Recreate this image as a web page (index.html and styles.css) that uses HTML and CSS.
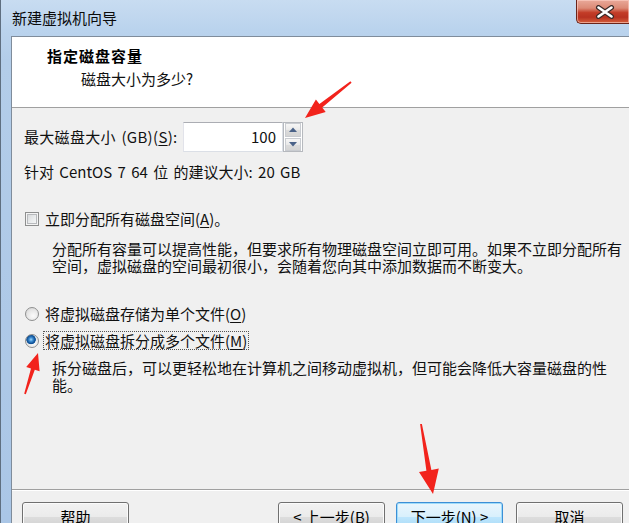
FILE: index.html
```html
<!DOCTYPE html>
<html lang="zh-CN">
<head>
<meta charset="utf-8">
<title>新建虚拟机向导</title>
<link rel="stylesheet" href="styles.css">
</head>
<body>
<div class="window">
  <div class="titlebar">
    <span class="title">新建虚拟机向导</span>
    <div class="close">
      <svg width="20" height="14" viewBox="0 0 20 14">
        <path d="M3.5 2.5 L16.5 11.5 M16.5 2.5 L3.5 11.5" stroke="#3b2a28" stroke-width="5" stroke-linecap="round" fill="none"/>
        <path d="M3.5 2.5 L16.5 11.5 M16.5 2.5 L3.5 11.5" stroke="#ffffff" stroke-width="2.6" stroke-linecap="round" fill="none"/>
      </svg>
    </div>
  </div>
  <div class="client">
    <div class="header">
      <div class="h-title">指定磁盘容量</div>
      <div class="h-sub">磁盘大小为多少?</div>
    </div>
    <div class="content">
      <div class="size-row">
        <span class="size-label">最大磁盘大小 (GB)(<u>S</u>):</span>
        <div class="spin">
          <div class="spin-input">100</div>
          <div class="spin-btns">
            <div class="spin-btn"><svg width="8" height="5" viewBox="0 0 8 5"><path d="M0 5 L4 0.5 L8 5 Z" fill="#4a6288"/></svg></div>
            <div class="spin-btn"><svg width="8" height="5" viewBox="0 0 8 5"><path d="M0 0 L4 4.5 L8 0 Z" fill="#4a6288"/></svg></div>
          </div>
        </div>
      </div>
      <div class="rec">针对 CentOS 7 64 位 的建议大小: 20 GB</div>
      <div class="opt check-row">
        <span class="checkbox"></span>
        <span class="opt-label">立即分配所有磁盘空间(<u>A</u>)。</span>
      </div>
      <div class="desc desc-a">分配所有容量可以提高性能，但要求所有物理磁盘空间立即可用。如果不立即分配所有<br>空间，虚拟磁盘的空间最初很小，会随着您向其中添加数据而不断变大。</div>
      <div class="opt radio-first">
        <span class="radio"></span>
        <span class="opt-label">将虚拟磁盘存储为单个文件(<u>O</u>)</span>
      </div>
      <div class="opt radio-second">
        <span class="radio checked"></span>
        <span class="opt-label focused">将虚拟磁盘拆分成多个文件(<u>M</u>)</span>
      </div>
      <div class="desc desc-b">拆分磁盘后，可以更轻松地在计算机之间移动虚拟机，但可能会降低大容量磁盘的性<br>能。</div>
    </div>
    <div class="footer">
      <div class="btn btn-help">帮助</div>
      <div class="btn btn-back">&lt; 上一步(B)</div>
      <div class="btn btn-next default">下一步(N) &gt;</div>
      <div class="btn btn-cancel">取消</div>
    </div>
  </div>
</div>
<svg class="annot" width="629" height="523" viewBox="0 0 629 523">
  <polygon fill="#f2231c" points="351.6,82.8 322.2,107.4 325.7,112.0 305,118 315.9,99.4 319.4,104.0 350.4,81.2"/>
  <polygon fill="#f2231c" points="25.8,394.2 34.8,369.8 39.6,371.3 38,353 26.2,367.1 31.0,368.6 24.2,393.8"/>
  <polygon fill="#f2231c" points="421.9,423.9 431.4,469.9 438.8,468.6 433,494 419.0,472.0 426.4,470.7 420.1,424.1"/>
</svg>
</body>
</html>
```
FILE: styles.css
```css
html, body {
  margin: 0;
  padding: 0;
}
body {
  width: 629px;
  height: 523px;
  overflow: hidden;
  position: relative;
  font-family: "Noto Sans CJK SC", "Noto Sans", sans-serif;
  font-size: 15px;
  color: #111;
  background: #b9d1ea;
}
u {
  text-decoration: underline;
  text-underline-offset: 2px;
}
.window {
  height: 523px;
  display: flex;
  flex-direction: column;
  border-left: 1px solid #5f6f80;
  box-sizing: border-box;
  background: linear-gradient(180deg, #c8dcf1 0px, #bad3ed 30px, #b3cde9 60px, #aac6e6 523px);
}
.titlebar {
  height: 36px;
  flex: none;
  display: flex;
  align-items: flex-start;
  box-sizing: border-box;
}
.title {
  padding: 8px 0 0 11px;
  line-height: 20px;
  font-size: 15px;
  color: #0b0b0b;
}
.close {
  margin-left: auto;
  width: 53px;
  height: 24px;
  box-sizing: border-box;
  border: 1px solid #6b2419;
  border-top: none;
  border-right: none;
  border-radius: 0 0 0 5px;
  background: linear-gradient(180deg, #e9a99a 0%, #dc8a76 35%, #c33c27 55%, #b83221 75%, #d5603c 100%);
  box-shadow: inset 0 0 0 1px rgba(255, 210, 200, 0.6);
  display: flex;
  align-items: center;
  justify-content: center;
}
.close svg {
  display: block;
  margin-left: 3px;
}
.client {
  flex: 1;
  display: flex;
  flex-direction: column;
  margin-left: 10px;
  border-left: 1px solid #7f8c9b;
  border-top: 1px solid #7f8c9b;
  background: #f0f0f0;
  min-height: 0;
}
.header {
  height: 71px;
  flex: none;
  box-sizing: border-box;
  background: #ffffff;
  border-bottom: 1px solid #a0a0a0;
  padding: 9px 0 0 35px;
}
.h-title {
  font-weight: bold;
  line-height: 20px;
  font-size: 15px;
  letter-spacing: 1px;
  color: #000;
}
.h-sub {
  margin-top: 3px;
  margin-left: 34px;
  line-height: 20px;
  color: #111;
}
.content {
  flex: 1;
  min-height: 0;
  padding: 14px 0 0 12px;
  display: flex;
  flex-direction: column;
  align-items: flex-start;
}
.size-row {
  display: flex;
  align-items: center;
  height: 30px;
}
.size-label {
  width: 159px;
  line-height: 30px;
  word-spacing: 2px;
  letter-spacing: 0.3px;
}
.spin {
  display: flex;
  height: 30px;
}
.spin-input {
  width: 100px;
  height: 30px;
  box-sizing: border-box;
  border: 1px solid #dbdfe6;
  border-top-color: #abadb3;
  border-left-color: #e2e3ea;
  background: #fff;
  text-align: right;
  padding-right: 6px;
  line-height: 28px;
  color: #111;
}
.spin-btns {
  width: 20px;
  display: flex;
  flex-direction: column;
  border: 1px solid #b6b9be;
  box-sizing: border-box;
  background: #fff;
}
.spin-btn {
  flex: 1;
  display: flex;
  align-items: center;
  justify-content: center;
  border: 1px solid #c9ccd1;
  margin: 0 1px;
  background: linear-gradient(180deg, #f6f6f6 0%, #e9e9e9 50%, #dcdcdc 51%, #d4d4d4 100%);
}
.spin-btn + .spin-btn {
  margin-top: 1px;
}
.spin-btn svg {
  display: block;
}
.rec {
  margin-top: 10px;
  line-height: 19px;
  word-spacing: 2px;
}
.opt {
  display: flex;
  align-items: center;
  height: 19px;
}
.check-row {
  margin-top: 28px;
}
.checkbox {
  width: 14px;
  height: 14px;
  box-sizing: border-box;
  margin-left: 1px;
  border: 1px solid #8e8f8f;
  background: linear-gradient(135deg, #d2d4d6 0%, #eceeef 60%, #fbfbfb 100%);
  box-shadow: inset 0 0 0 1px #f4f4f4, inset 0 0 0 2px #b8babd;
}
.radio {
  width: 14px;
  height: 14px;
  box-sizing: border-box;
  margin-left: 1px;
  border-radius: 50%;
  border: 1px solid #8e8f8f;
  background: radial-gradient(circle at 60% 65%, #fbfbfb 0%, #e6e6e6 55%, #cfcfcf 100%);
}
.radio.checked {
  background:
    radial-gradient(circle at 42% 38%, #9fd8fb 0px, #3a8ad0 2px, #0f4f93 4px, #1a5fa6 4.5px, transparent 5px),
    radial-gradient(circle at 60% 65%, #fbfbfb 0%, #e6e6e6 55%, #cfcfcf 100%);
}
.opt-label {
  margin-left: 4px;
  padding: 0 1px;
  line-height: 17px;
  border: 1px dotted transparent;
}
.opt-label.focused {
  border-color: #555;
}
.desc {
  margin-left: 28px;
  line-height: 17px;
  white-space: nowrap;
}
.desc-a {
  margin-top: 12px;
}
.radio-first {
  margin-top: 30px;
}
.radio-second {
  margin-top: 8px;
}
.desc-b {
  margin-top: 9px;
}
.footer {
  height: 34px;
  flex: none;
  box-sizing: border-box;
  border-top: 1px solid #a0a0a0;
  box-shadow: inset 0 1px 0 #ffffff;
  padding: 12px 0 0 10px;
  display: flex;
  align-items: flex-start;
}
.btn {
  width: 107px;
  height: 29px;
  flex: none;
  box-sizing: border-box;
  border: 1px solid #707070;
  border-radius: 3px;
  background: linear-gradient(180deg, #f2f2f2 0%, #ebebeb 50%, #dddddd 51%, #cfcfcf 100%);
  box-shadow: inset 0 0 0 1px #fbfbfb;
  text-align: center;
  line-height: 27px;
  color: #000;
}
.btn-back {
  margin-left: 149px;
}
.btn-next {
  margin-left: 11px;
}
.btn-cancel {
  margin-left: 13px;
}
.btn.default {
  border-color: #3c8fd6;
  background: linear-gradient(180deg, #eaf6fd 0%, #d9f0fc 50%, #bee6fd 51%, #a7d9f5 100%);
  box-shadow: inset 0 0 0 1px #9fdcfa;
}
.annot {
  position: absolute;
  left: 0;
  top: 0;
  pointer-events: none;
}
```
